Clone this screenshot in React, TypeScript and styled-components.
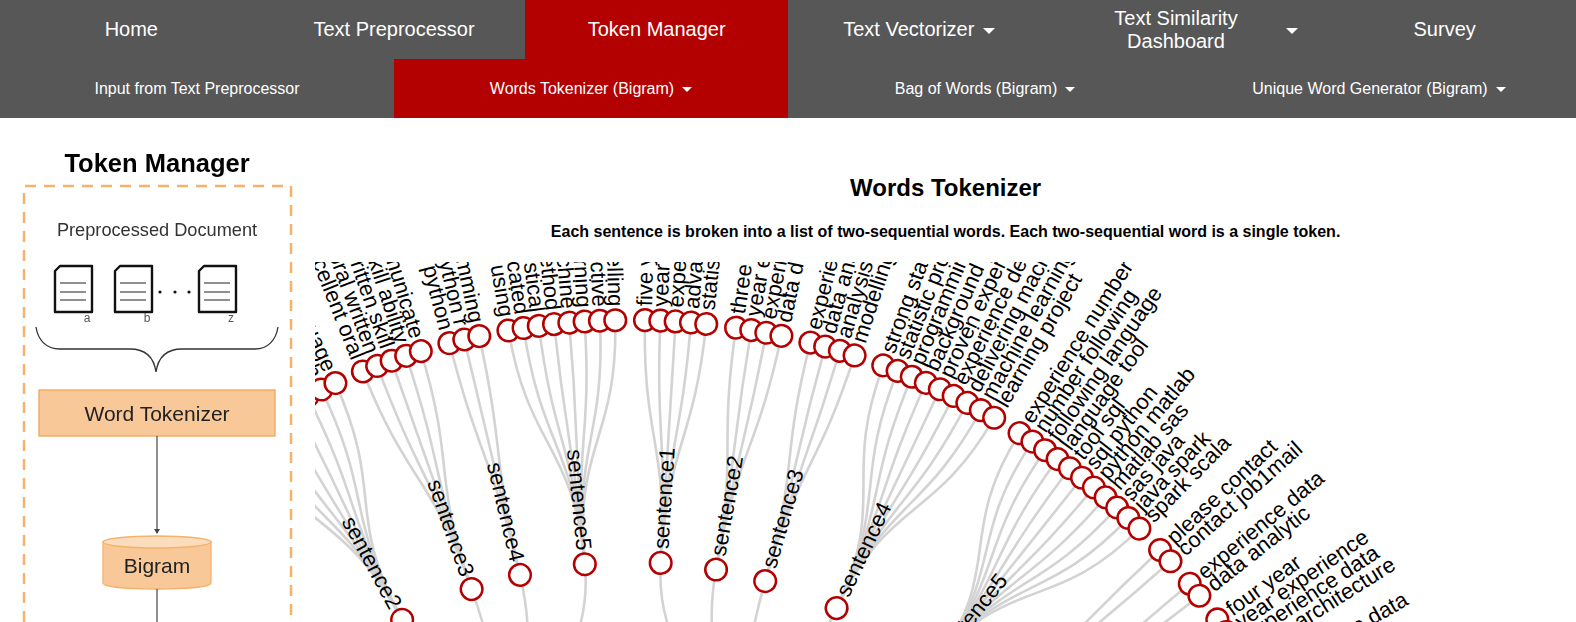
import React from 'react';
import styled, { createGlobalStyle } from 'styled-components';

const GlobalStyle = createGlobalStyle`
    html, body {
        margin: 0;
        padding: 0;
        height: 100%;
        overflow: hidden;
        background: #fff;
        font-family: 'Liberation Sans', Arial, sans-serif;
    }
`;

const NavRow = styled.nav<{ $cols: number; $size: number }>`
    display: grid;
    grid-template-columns: repeat(${(p) => p.$cols}, 1fr);
    height: 59px;
    background-color: #575757;
    color: #fff;
    font-size: ${(p) => p.$size}px;
    line-height: 23px;
`;

const NavItem = styled.div<{ $active?: boolean }>`
    display: flex;
    align-items: center;
    justify-content: center;
    padding: 0 15px;
    text-align: center;
    background-color: ${(p) => (p.$active ? '#b30000' : 'transparent')};
`;

const WrappedLabel = styled.span`
    flex: 1;
    padding: 0 30px 0 39px;
`;

const Caret = styled.i<{ $size: number }>`
    margin-left: ${(p) => p.$size + 3}px;
    margin-top: 2px;
    border-top: ${(p) => p.$size}px solid #fff;
    border-left: ${(p) => p.$size}px solid transparent;
    border-right: ${(p) => p.$size}px solid transparent;
`;

const Content = styled.main`
    display: grid;
    grid-template-columns: 20% 80%;
    height: 504px;
    overflow: hidden;
`;

const DiagramSvg = styled.svg`
    display: block;
    width: 315px;
    height: 504px;
    filter: blur(0.35px);
    font-family: 'Liberation Sans', Arial, sans-serif;
`;

const ChartColumn = styled.section`
    display: flex;
    flex-direction: column;
    align-items: center;
    min-width: 0;
    padding-top: 55px;
`;

const Title = styled.h2`
    margin: 0;
    font-size: 24px;
    line-height: 30px;
    font-weight: 700;
    color: #000;
`;

const Subtitle = styled.p`
    margin: 19px 0 20px;
    font-size: 16px;
    line-height: 20px;
    font-weight: 700;
    color: #000;
`;

const ChartSvg = styled.svg`
    display: block;
    flex: none;
    width: 100%;
    height: 360px;
    font-family: 'Liberation Sans', Arial, sans-serif;
`;

const LinkPath = styled.path`
    fill: none;
    stroke: #d3d3d3;
    stroke-width: 2.6;
`;

const NodeCircle = styled.circle`
    fill: #fff;
    stroke: #b30000;
    stroke-width: 2.5;
`;

const NodeLabel = styled.text`
    font-size: 22px;
    fill: #000;
`;

// leaf groups, clockwise, each one hangs off a sentence node
const groups: { name: string; start: number; words: string[] }[] = [
    {
        name: 'sentence2',
        start: -32.6,
        words: ['communication skill', 'skill verbal', 'verbal ability', 'ability speak', 'speak read', 'read write', 'write english', 'english language'],
    },
    { name: 'sentence3', start: -21.735, words: ['excellent oral', 'oral written', 'written skill', 'skill ability', 'ability communicate'] },
    { name: 'sentence4', start: -14.525, words: ['programming python', 'python r', 'r programming'] },
    {
        name: 'sentence5',
        start: -9.745,
        words: ['model using', 'using sophisticated', 'sophisticated statistical', 'statistical method', 'method machine', 'machine learning', 'learning predictive', 'predictive modelling'],
    },
    { name: 'sentence1', start: 1.11, words: ['five year', 'year experience', 'experience advanced', 'advanced statistical', 'statistical analysis'] },
    { name: 'sentence2', start: 8.35, words: ['three year', 'year experience', 'experience data', 'data driven'] },
    { name: 'sentence3', start: 14.35, words: ['experience data', 'data analysis', 'analysis modelling', 'modelling technique'] },
    {
        name: 'sentence4',
        start: 20.4,
        words: ['strong statistic', 'statistic programming', 'programming background', 'background proven', 'proven experience', 'experience delivering', 'delivering machine', 'machine learning', 'learning project'],
    },
    {
        name: 'sentence5',
        start: 32.47,
        words: ['experience number', 'number following', 'following language', 'language tool', 'tool sql', 'sql python', 'python matlab', 'matlab sas', 'sas java', 'java spark', 'spark scala'],
    },
    { name: 'sentence6', start: 46.97, words: ['please contact', 'contact job1mail'] },
    { name: 'sentence1', start: 50.53, words: ['experience data', 'data analytic'] },
    { name: 'sentence2', start: 54.1, words: ['four year', 'year experience', 'experience data', 'data architecture'] },
    { name: 'sentence3', start: 60.1, words: ['experience data', 'data science'] },
];

const CENTER_X = 631;
const CENTER_Y = 1044;
const LEAF_R = 724;
const SENTENCE_R = 482;
const DOC_R = 241;
const STEP = 1.215;

const polar = (deg: number, r: number) => {
    const rad = (deg * Math.PI) / 180;
    return `${(CENTER_X + r * Math.sin(rad)).toFixed(1)} ${(CENTER_Y - r * Math.cos(rad)).toFixed(1)}`;
};

const radialLink = (a0: number, r0: number, a1: number, r1: number) => {
    const mid = (r0 + r1) / 2;
    return `M${polar(a0, r0)}C${polar(a0, mid)} ${polar(a1, mid)} ${polar(a1, r1)}`;
};

const RadialNode = ({ angle, r, label }: { angle: number; r: number; label: string }) => {
    const left = angle < 0;
    const transform = `translate(${CENTER_X} ${CENTER_Y}) rotate(${angle - 90}) translate(${r} 0)${left ? ' rotate(180)' : ''}`;
    return (
        <g>
            <NodeCircle cx={0} cy={0} r={10.8} transform={transform} />
            <NodeLabel transform={transform} x={left ? -14 : 14} dy="0.31em" textAnchor={left ? 'end' : 'start'}>
                {label}
            </NodeLabel>
        </g>
    );
};

// which document node each sentence group goes back to
const docAngle = (i: number) => (i < 4 ? -23 : i < 9 ? 21 : 62);

const Dendrogram = () => {
    const placed = groups.map((g, i) => {
        const angles = g.words.map((_, k) => g.start + k * STEP);
        const mid = (angles[0] + angles[angles.length - 1]) / 2;
        return { ...g, angles, mid, doc: docAngle(i) };
    });
    return (
        <ChartSvg viewBox="315 262 1261 360">
            {placed.map((g, i) => (
                <g key={i}>
                    <LinkPath d={radialLink(g.doc, DOC_R, g.mid, SENTENCE_R)} />
                    {g.angles.map((a, k) => (
                        <LinkPath key={k} d={radialLink(g.mid, SENTENCE_R, a, LEAF_R)} />
                    ))}
                </g>
            ))}
            {placed.map((g, i) => (
                <RadialNode key={i} angle={g.mid} r={SENTENCE_R} label={g.name} />
            ))}
            {placed.map((g, i) =>
                g.angles.map((a, k) => <RadialNode key={`${i}-${k}`} angle={a} r={LEAF_R} label={g.words[k]} />),
            )}
        </ChartSvg>
    );
};

const DocIcon = ({ x, tag }: { x: number; tag: string }) => (
    <g>
        <path d={`M${x + 5} 266H${x + 37}V312H${x}V271Z`} fill="#fff" stroke="#111" strokeWidth="2.4" strokeLinejoin="round" />
        <path d={`M${x + 5} 283H${x + 31}M${x + 5} 292H${x + 31}M${x + 5} 300H${x + 31}`} stroke="#222" strokeWidth="1.2" />
        <text x={x + 32} y="322" fontSize="12" fill="#555" textAnchor="middle">
            {tag}
        </text>
    </g>
);

const PipelineDiagram = () => (
    <DiagramSvg viewBox="0 118 315 504">
        <text x="157" y="172" fontSize="25.5" fontWeight="700" fill="#000" textAnchor="middle">
            Token Manager
        </text>
        <path d="M24 660V186H291V660" fill="none" stroke="#f4b26a" strokeWidth="2.5" strokeDasharray="11 8" />
        <text x="157" y="236" fontSize="18.2" fill="#333" textAnchor="middle">
            Preprocessed Document
        </text>
        <DocIcon x={55} tag="a" />
        <DocIcon x={115} tag="b" />
        <DocIcon x={199} tag="z" />
        <circle cx="160" cy="292" r="1.6" fill="#111" />
        <circle cx="175" cy="292" r="1.6" fill="#111" />
        <circle cx="189" cy="292" r="1.6" fill="#111" />
        <path
            d="M36 327C38 340 46 349 60 349H130C146 349 154 358 156 372C158 358 166 349 182 349H255C268 349 276 340 278 327"
            fill="none"
            stroke="#333"
            strokeWidth="1.3"
        />
        <rect x="39" y="390" width="236" height="46" fill="#f8c899" stroke="#f0a658" strokeWidth="1.3" />
        <text x="157" y="421" fontSize="21" fill="#222" textAnchor="middle">
            Word Tokenizer
        </text>
        <path d="M157 436V530" stroke="#444" strokeWidth="1.2" />
        <path d="M154 529H160L157 534Z" fill="#444" />
        <path d="M103 542V583C103 587 127 589 157 589C187 589 211 587 211 583V542Z" fill="#f8c899" stroke="#f4b26a" strokeWidth="1.3" />
        <ellipse cx="157" cy="542" rx="54" ry="6" fill="#fbdcbd" stroke="#f4b26a" strokeWidth="1.3" />
        <text x="157" y="573" fontSize="21" fill="#222" textAnchor="middle">
            Bigram
        </text>
        <path d="M157 589V622" stroke="#444" strokeWidth="1.2" />
    </DiagramSvg>
);

const App = () => {
    return (
        <>
            <GlobalStyle />
            <NavRow $cols={6} $size={20}>
                <NavItem>Home</NavItem>
                <NavItem>Text Preprocessor</NavItem>
                <NavItem $active>Token Manager</NavItem>
                <NavItem>
                    Text Vectorizer
                    <Caret $size={6} />
                </NavItem>
                <NavItem>
                    <WrappedLabel>Text Similarity Dashboard</WrappedLabel>
                    <Caret $size={6} />
                </NavItem>
                <NavItem>Survey</NavItem>
            </NavRow>
            <NavRow $cols={4} $size={16}>
                <NavItem>Input from Text Preprocessor</NavItem>
                <NavItem $active>
                    Words Tokenizer (Bigram)
                    <Caret $size={5} />
                </NavItem>
                <NavItem>
                    Bag of Words (Bigram)
                    <Caret $size={5} />
                </NavItem>
                <NavItem>
                    Unique Word Generator (Bigram)
                    <Caret $size={5} />
                </NavItem>
            </NavRow>
            <Content>
                <PipelineDiagram />
                <ChartColumn>
                    <Title>Words Tokenizer</Title>
                    <Subtitle>Each sentence is broken into a list of two-sequential words. Each two-sequential word is a single token.</Subtitle>
                    <Dendrogram />
                </ChartColumn>
            </Content>
        </>
    );
};

export default App;
